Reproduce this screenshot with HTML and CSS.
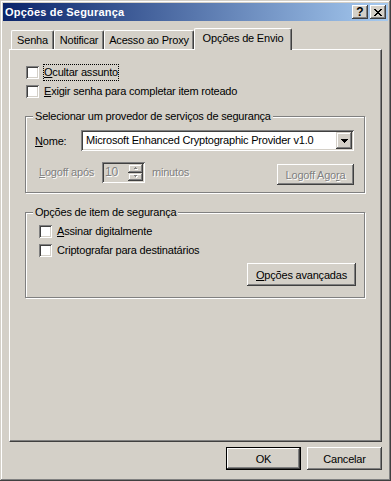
FILE: index.html
```html
<!doctype html>
<html lang="pt">
<head>
<meta charset="UTF-8">
<title>Opções de Segurança</title>
<link rel="stylesheet" href="styles.css">
</head>
<body>
<div class="window">
  <div class="caption">
    <span class="caption-title">Opções de Segurança</span>
    <span class="cbtn help">?</span>
    <span class="cbtn"><svg width="8" height="7" viewBox="0 0 8 7"><path d="M0 0h2v1h-2z M6 0h2v1h-2z M1 1h2v1h-2z M5 1h2v1h-2z M2 2h4v1h-4z M3 3h2v1h-2z M2 4h4v1h-4z M1 5h2v1h-2z M5 5h2v1h-2z M0 6h2v1h-2z M6 6h2v1h-2z"/></svg></span>
  </div>

  <div class="tabs">
    <div class="tab tab-senha">Senha</div>
    <div class="tab tab-notif">Notificar</div>
    <div class="tab tab-proxy">Acesso ao Proxy</div>
    <div class="tab tab-envio active">Opções de Envio</div>
  </div>

  <div class="panel">
    <div class="check top-check"><span class="box"></span><span class="cap focus"><u>O</u>cultar assunto</span></div>
    <div class="check top-check"><span class="box"></span><span class="cap"><u>E</u>xigir senha para completar item roteado</span></div>

    <fieldset class="group provider">
      <legend>Selecionar um provedor de serviços de segurança</legend>
      <div class="name-row">
        <span class="name-label"><u>N</u>ome:</span>
        <div class="combo">
          <span class="combo-text">Microsoft Enhanced Cryptographic Provider v1.0</span>
          <span class="drop"><svg width="7" height="4" viewBox="0 0 7 4"><path d="M0 0h7v1h-1v1h-1v1h-1v1h-1v-1h-1v-1h-1v-1h-1z"/></svg></span>
        </div>
      </div>
      <div class="logoff-row">
        <span class="dis logoff-label"><u>L</u>ogoff após</span>
        <div class="spin">
          <span class="spin-text dis">10</span>
          <span class="spin-btns">
            <span class="sb"><svg width="4" height="3" viewBox="0 0 4 3"><path fill="#fff" d="M2 1h1v1h1v1h-3v-1h1z"/><path fill="#808080" d="M1 0h1v1h1v1h-3v-1h1z"/></svg></span>
            <span class="sb"><svg width="4" height="3" viewBox="0 0 4 3"><path fill="#fff" d="M1 1h3v1h-1v1h-1v-1h-1z"/><path fill="#808080" d="M0 0h3v1h-1v1h-1v-1h-1z"/></svg></span>
          </span>
        </div>
        <span class="dis minutes">minutos</span>
        <button class="btn dis logoff-btn">Logoff Ago<u>r</u>a</button>
      </div>
    </fieldset>

    <fieldset class="group item">
      <legend>Opções de item de segurança</legend>
      <div class="check first"><span class="box"></span><span class="cap"><u>A</u>ssinar digitalmente</span></div>
      <div class="check"><span class="box"></span><span class="cap">Criptografar para destinatários</span></div>
      <div class="adv-row"><button class="btn adv-btn"><u>O</u>pções avançadas</button></div>
    </fieldset>
  </div>

  <div class="footer">
    <button class="btn default">OK</button>
    <button class="btn">Cancelar</button>
  </div>
</div>
</body>
</html>
```

FILE: styles.css
```css
body {margin: 0; background: #d4d0c8; font-family: "Liberation Sans", Arial, sans-serif; font-size: 11px; letter-spacing: -0.2px; color: #000;}
u {text-underline-offset: 1px;}

.window {width: 391px; height: 481px; box-sizing: border-box; padding: 3px; background: #d4d0c8;
  box-shadow: inset -1px -1px #404040, inset 1px 1px #d4d0c8, inset -2px -2px #808080, inset 2px 2px #fff;}

/* title bar */
.caption {height: 18px; display: flex; align-items: center; padding: 0 2px; color: #fff; font-weight: bold;
  background: linear-gradient(to right, #0a246a, #a6caf0);}
.caption-title {flex: 1; letter-spacing: 0.2px;}
.cbtn {width: 16px; height: 14px; box-sizing: border-box; display: flex; align-items: center; justify-content: center; background: #d4d0c8; color: #000;
  box-shadow: inset -1px -1px #404040, inset 1px 1px #fff, inset -2px -2px #808080;}
.cbtn + .cbtn {margin-left: 2px;}
.help {font-size: 12px; line-height: 14px; letter-spacing: 0;}

/* tabs */
.tabs {display: flex; align-items: flex-end; height: 21px; margin: 7px 0 0 8px;}
.tab {height: 19px; box-sizing: border-box; padding: 0; text-align: center; line-height: 18px; background: #d4d0c8; white-space: nowrap;
  border-top: 1px solid #fff; border-left: 1px solid #fff; border-right: 1px solid #404040;
  border-radius: 2px 2px 0 0; box-shadow: inset -1px 0 #808080;}
.tab-senha {width: 43px;}
.tab-notif {width: 50px;}
.tab-proxy {width: 90px;}
.tab-envio {width: 98px;}
.tab.active {height: 22px; margin: 0 0 -1px 0; padding-bottom: 3px; z-index: 1;}

/* tab page */
.panel {height: 393px; margin: 0 6px; box-sizing: border-box; padding: 13px 0 0 15px;
  border: 1px solid; border-color: #fff #404040 #404040 #fff; box-shadow: inset -1px -1px #808080;}

.check {display: flex; align-items: center; height: 19px;}
.top-check {padding-left: 1px;}
.box {width: 13px; height: 13px; flex: none; margin-right: 4px; background: #fff;
  box-shadow: inset 1px 1px #808080, inset -1px -1px #fff, inset 2px 2px #404040, inset -2px -2px #d4d0c8;}
.cap {border: 1px solid transparent; line-height: 13px; padding: 1px 0;}
.cap.focus {border: 1px dotted #000;}

/* group boxes */
.group {width: 340px; box-sizing: border-box; margin: 9px 0 0 0; min-width: 0;
  border: 1px solid #808080; box-shadow: 1px 1px #fff, inset 1px 1px #fff;}
.group legend {line-height: 13px; padding: 0 2px; background: #d4d0c8;}
.provider {padding: 0 10px 7px 9px;}
.provider legend {margin-left: -2px;}
.item {margin-top: 13px; padding: 0 8px 11px 13px;}
.item legend {margin-left: -6px;}
.item .check.first {margin-top: 3px;}

.name-row {display: flex; align-items: center; margin-top: 7px;}
.name-label {width: 46px; flex: none;}
.combo {flex: 1; height: 21px; box-sizing: border-box; padding: 2px; display: flex; background: #fff;
  box-shadow: inset 1px 1px #808080, inset -1px -1px #fff, inset 2px 2px #404040, inset -2px -2px #d4d0c8;}
.combo-text {flex: 1; padding-left: 3px; line-height: 17px; white-space: nowrap; overflow: hidden;}
.drop {width: 16px; height: 17px; display: flex; align-items: center; justify-content: center; background: #d4d0c8;
  box-shadow: inset -1px -1px #404040, inset 1px 1px #d4d0c8, inset -2px -2px #808080, inset 2px 2px #fff;}

.logoff-row {display: flex; align-items: flex-start; margin-top: 11px;}
.dis {color: #808080; text-shadow: 1px 1px #fff;}
.logoff-label {margin-left: 4px; width: 63px; line-height: 21px;}
.spin {width: 43px; height: 21px; box-sizing: border-box; padding: 2px; display: flex; background: #d4d0c8;
  box-shadow: inset 1px 1px #808080, inset -1px -1px #fff, inset 2px 2px #404040, inset -2px -2px #d4d0c8;}
.spin-text {flex: 1; padding-left: 1px; line-height: 17px; font-size: 12px;}
.spin-btns {width: 15px; display: flex; flex-direction: column;}
.sb {flex: 1; display: flex; align-items: center; justify-content: center;
  box-shadow: inset -1px -1px #404040, inset 1px 1px #d4d0c8, inset -2px -2px #808080, inset 2px 2px #fff;}
.minutes {margin-left: 7px; line-height: 21px;}

/* push buttons */
.btn {font: inherit; letter-spacing: inherit; color: #000; background: #d4d0c8; border: 0; padding: 0; height: 23px; width: 75px;
  box-shadow: inset -1px -1px #404040, inset 1px 1px #fff, inset -2px -2px #808080, inset 2px 2px #d4d0c8;}
.btn.dis {color: #808080;}
.logoff-btn {margin-left: auto; margin-top: 2px; height: 21px; width: 77px;}
.adv-row {display: flex; justify-content: flex-end; margin-top: 3px;}
.adv-btn {width: 109px;}
.btn.default {border: 1px solid #000;}

.footer {display: flex; justify-content: flex-end; gap: 6px; margin: 5px 6px 0;}
```
